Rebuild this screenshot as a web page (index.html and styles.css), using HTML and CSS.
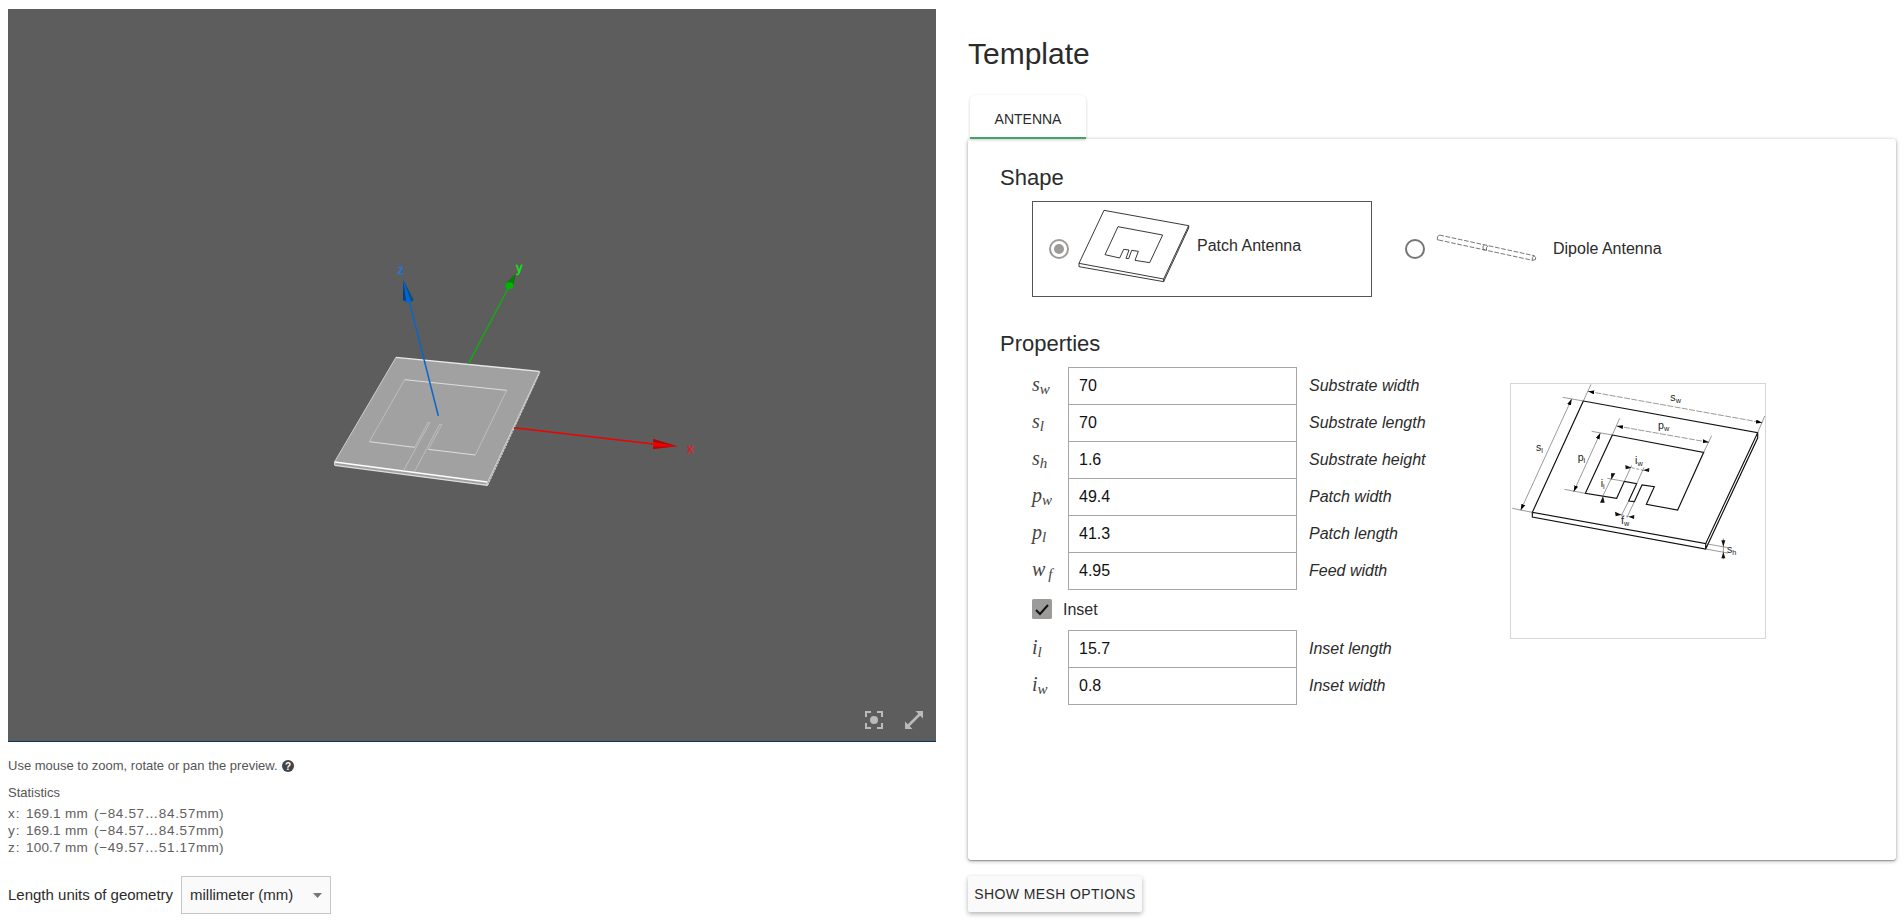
FILE: index.html
```html
<!DOCTYPE html>
<html lang="en">
<head>
<meta charset="utf-8">
<title>Template</title>
<link rel="stylesheet" href="styles.css">
</head>
<body>
<main class="layout">
  <section class="preview">
    <div class="viewer">
      <svg class="scene" viewBox="0 0 928 733">
        <g transform="translate(312 241) scale(.33333)" fill="none">
          <path d="M228 322L658 364L658 371L503 707L44 646L44 635Z" fill="#a1a1a1"/>
          <path d="M44 635L228 322M658 366L502 698" stroke="#cfcfcf" stroke-width="3"/>
          <path d="M228 322L658 364" stroke="#e8e8e8" stroke-width="4"/>
          <path d="M44 636L501 696" stroke="#fff" stroke-width="4.500"/>
          <path d="M44 646L503 706M44 635V646M501 696V706" stroke="#dedede" stroke-width="3.500"/>
          <path d="M503 706L659 369V364" stroke="#d4d4d4" stroke-width="3" stroke-dasharray="7 3"/>
          <path d="M254 389L560 421M148 575L284 592M325 598L466 615" stroke="#dedede" stroke-width="3"/>
          <path d="M148 575L254 389M560 421L466 615M284 592L324 517H330L250 663M325 598L366 523H359L283 666" stroke="#c3c3c3" stroke-width="2.500"/>
          <path d="M445 342L568 108" stroke="#0fae0f" stroke-width="4.500"/>
          <path d="M557 101L588 70L579 110Z" fill="#087d08"/><ellipse cx="568" cy="107" rx="12" ry="10" fill="#00b500"/>
          <path d="M355 498L268 154" stroke="#0867ca" stroke-width="4.500"/>
          <path d="M250 90L249 150Q262 165 281 150Z" fill="#0067d8"/><path d="M250 90L249 150L258 153Z" fill="#123d68"/><path d="M250 90L281 150L274 155Z" fill="#174976"/>
          <path d="M582 533L1000 582" stroke="#f00000" stroke-width="4.500"/>
          <path d="M1000 567L1072 589L999 597Z" fill="#f00000"/><path d="M1000 567L1072 589L1000 576Z" fill="#991010"/><path d="M999 597L1072 589L999 590Z" fill="#b30707"/>
          <g class="axis-labels"><text x="233" y="73" fill="#1b79df" stroke="#1b79df">z</text><text x="588" y="66" fill="#0de90d" stroke="#0de90d">y</text><text x="1101" y="608" fill="#e51b1b" stroke="#e51b1b">x</text></g>
        </g>
      </svg>
      <div class="viewer-tools">
        <svg width="18" height="18" viewBox="0 0 18 18"><path d="M1 6V1H6M12 1H17V6M17 12V17H12M6 17H1V12" fill="none" stroke="#bababa" stroke-width="2"/><circle cx="9" cy="9" r="4" fill="#bababa"/></svg>
        <svg width="18" height="18" viewBox="0 0 18 18"><path d="M10.500 0H18V7.500L15.200 4.700L4.700 15.200L7.500 18H0V10.500L2.800 13.300L13.300 2.800Z" fill="#bababa"/></svg>
      </div>
    </div>
    <div class="hint">Use mouse to zoom, rotate or pan the preview. <svg width="12" height="12" viewBox="0 0 12 12"><circle cx="6" cy="6" r="6" fill="#444"/><text class="help" x="6" y="9.700" text-anchor="middle">?</text></svg></div>
    <div class="stats-title">Statistics</div>
    <div class="stats">
      <div class="stat"><span class="axis">x:</span><span class="size">169.1</span><span class="unit">mm</span><span class="range">(−84.57…84.57</span><span class="end">mm)</span></div>
      <div class="stat"><span class="axis">y:</span><span class="size">169.1</span><span class="unit">mm</span><span class="range">(−84.57…84.57</span><span class="end">mm)</span></div>
      <div class="stat"><span class="axis">z:</span><span class="size">100.7</span><span class="unit">mm</span><span class="range">(−49.57…51.17</span><span class="end">mm)</span></div>
    </div>
    <div class="units"><span class="units-label">Length units of geometry</span><div class="select">millimeter (mm)<svg width="9" height="5" viewBox="0 0 9 5"><path d="M0 0H9L4.500 5Z" fill="#777"/></svg></div></div>
  </section>

  <section class="editor">
    <h1>Template</h1>
    <div class="tab">ANTENNA</div>
    <div class="card">
      <h2>Shape</h2>
      <div class="shapes">
        <div class="shape selected">
          <svg class="radio" width="20" height="20" viewBox="0 0 20 20"><circle cx="10" cy="10" r="9" fill="none" stroke="#9c9b9a" stroke-width="2"/><circle cx="10" cy="10" r="5" fill="#9c9b9a"/></svg>
          <svg class="patch" width="112" height="74" viewBox="0 0 336 222"><path d="M78 4L332 50L257 210L3 163ZM3 163V173L257 218L332 57V50M257 210V218M120 53L254 78L215 161L171 154L181 127L161 124L152 149L144 148L153 123L137 121L125 147L81 137Z" fill="none" stroke="#222" stroke-width="2.700"/></svg>
          <span>Patch Antenna</span>
        </div>
        <div class="shape dipole">
          <svg class="radio" width="20" height="20" viewBox="0 0 20 20"><circle cx="10" cy="10" r="9" fill="none" stroke="#757575" stroke-width="2"/></svg>
          <svg class="rod" width="102" height="28" viewBox="0 0 306 84"><path d="M10 3L294 65M8 18L290 79" stroke="#444" stroke-width="2.200" stroke-dasharray="14 5"/><path d="M10 3Q2 7 4 17L8 18M294 65Q302 70 298 77L290 79M295 65Q286 69 290 79M145 32Q138 38 142 47L148 48M156 35Q148 41 152 50" fill="none" stroke="#444" stroke-width="2.200"/></svg>
          <span>Dipole Antenna</span>
        </div>
      </div>
      <h2 class="properties-title">Properties</h2>
      <div class="properties">
        <div class="form">
          <div class="fields">
            <div class="field"><span class="symbol">s<sub>w</sub></span><input value="70"><em>Substrate width</em></div>
            <div class="field"><span class="symbol">s<sub>l</sub></span><input value="70"><em>Substrate length</em></div>
            <div class="field"><span class="symbol">s<sub>h</sub></span><input value="1.6"><em>Substrate height</em></div>
            <div class="field"><span class="symbol">p<sub>w</sub></span><input value="49.4"><em>Patch width</em></div>
            <div class="field"><span class="symbol">p<sub>l</sub></span><input value="41.3"><em>Patch length</em></div>
            <div class="field"><span class="symbol wide">w<sub>f</sub></span><input value="4.95"><em>Feed width</em></div>
          </div>
          <div class="inset"><svg width="20" height="20" viewBox="0 0 20 20"><rect width="20" height="20" rx="1.500" fill="#9c9b99"/><path d="M4 11L8 15L16 6" fill="none" stroke="#111" stroke-width="2"/></svg><span>Inset</span></div>
          <div class="fields">
            <div class="field"><span class="symbol">i<sub>l</sub></span><input value="15.7"><em>Inset length</em></div>
            <div class="field"><span class="symbol">i<sub>w</sub></span><input value="0.8"><em>Inset width</em></div>
          </div>
        </div>
        <svg class="diagram" viewBox="33 42 762 762">
          <defs><marker id="arrow" viewBox="0 0 19 12" refX="19" refY="6" markerWidth="19" markerHeight="12" markerUnits="userSpaceOnUse" orient="auto-start-reverse"><path d="M0 0L19 6L0 12Z"/></marker></defs>
          <g fill="none" stroke="#111" stroke-width="3.500">
            <path d="M250 93L773 188L617 521L97 427ZM97 427V441L617 537L773 204V188M617 521V537"/>
            <path d="M337 195L611 247L533 420L439 403L463 350L426 345L403 395L386 393L410 341L373 334L350 385L256 370Z"/>
          </g>
          <g fill="none" stroke="#555" stroke-width="1.800">
            <path d="M250 93L273 43M773 188L794 138M337 195L359 145M611 247L635 197M188 82L250 93M37 415L97 427M275 184L337 195M193 358L256 370M373 334L395 286M410 341L432 292M373 334L322 325M386 393L363 439M403 395L381 442M617 521L684 533M617 537L684 549M670 505V568"/>
            <path d="M395 293L430 301M365 434L385 440" stroke-dasharray="9 5"/>
            <g marker-start="url(#arrow)" marker-end="url(#arrow)"><path d="M264 64L787 158" stroke-dasharray="18 4"/><path d="M350 168L627 217" stroke-dasharray="18 4"/><path d="M215 87L62 421"/><path d="M301 189L221 365"/></g>
            <path d="M339 309L333 327M333 327L307 381"/>
            <g stroke="none" fill="#111"><path d="M333 310H346L334 329ZM300 398L309 378L314 398ZM376 285L395 293L377 298ZM448 294L429 301L447 306ZM345 425L365 434L347 439ZM403 435L385 440L402 447ZM664 511H676L670 530ZM664 565H676L670 546Z"/></g>
          </g>
          <g class="dimensions"><text x="511" y="94">s<tspan dy="6">w</tspan></text><text x="474" y="178">p<tspan dy="6">w</tspan></text><text x="108" y="242">s<tspan dy="6">l</tspan></text><text x="233" y="272">p<tspan dy="6">l</tspan></text><text x="405" y="281">i<tspan dy="6">w</tspan></text><text x="302" y="350">i<tspan dy="6">l</tspan></text><text x="363" y="461">f<tspan dy="6">w</tspan></text><text x="681" y="549">s<tspan dy="6">h</tspan></text></g>
        </svg>
      </div>
    </div>
    <button class="mesh">SHOW MESH OPTIONS</button>
  </section>
</main>
</body>
</html>
```
FILE: styles.css
```css
* { box-sizing: border-box; }
body { margin: 0; background: #fff; color: #2b2b2b; font: 16px/20px "Liberation Sans", Arial, sans-serif; overflow: hidden; }
.layout { display: flex; gap: 32px; height: 924px; padding: 9px 8px 0; }
.preview, .editor { width: 928px; flex: none; display: flex; flex-direction: column; align-items: flex-start; }
.viewer { width: 928px; height: 733px; flex: none; background: #5d5d5d; border-bottom: 1px solid #06365b; position: relative; }
.scene { display: block; width: 928px; height: 733px; }
.axis-labels { font: 38px "Liberation Sans", Arial, sans-serif; stroke-width: 1.2; }
.viewer-tools { position: absolute; right: 13px; bottom: 12px; display: flex; gap: 22px; }
.viewer-tools svg { display: block; }
.hint { height: 16px; margin-top: 16px; display: flex; align-items: center; gap: 4px; color: #555; font-size: 13px; line-height: 16px; white-space: nowrap; }
.help { font: bold 10px "Liberation Sans", Arial, sans-serif; fill: #fff; }
.stats-title { margin-top: 11px; height: 16px; color: #555; font-size: 13px; line-height: 16px; }
.stats { margin-top: 4px; color: #606060; font-size: 13.5px; letter-spacing: .2px; }
.stat { display: grid; grid-template-columns: 18px 39px 29px 102px 30px; height: 17px; line-height: 17px; white-space: nowrap; }
.axis { letter-spacing: 1px; }
.range { letter-spacing: .65px; }
.units { margin-top: 20px; display: flex; align-items: center; font-size: 15px; }
.units-label { width: 173px; white-space: nowrap; }
.select { width: 150px; height: 38px; border: 1px solid #c6c6c6; background: #fafafa; padding: 0 8px; display: flex; align-items: center; justify-content: space-between; }
h1, h2 { font-weight: 400; margin: 0; }
h1 { margin-top: 27px; height: 36px; font-size: 30px; line-height: 36px; }
.tab { width: 116px; height: 44px; margin: 23px 0 0 2px; padding-top: 14px; border-bottom: 2px solid #43a36d; border-radius: 6px 6px 0 0; box-shadow: 0 1px 3px rgba(0,0,0,.2); background: #fff; text-align: center; font-size: 14px; line-height: 20px; position: relative; }
.card { width: 928px; height: 721px; flex: none; padding: 25px 32px; background: #fff; border-radius: 3px; box-shadow: 0 1px 4px rgba(0,0,0,.35), 0 1px 1px rgba(0,0,0,.25); }
h2 { height: 28px; font-size: 22px; line-height: 28px; }
.shapes { display: flex; margin: 9px 0 0 32px; height: 96px; }
.shape { display: flex; height: 96px; }
.selected { width: 340px; border: 1px solid #555; padding-left: 16px; }
.radio { margin-top: 37px; flex: none; }
.patch { margin: 7px 0 0 9px; flex: none; }
.selected span { margin: 34px 0 0 7px; }
.dipole { margin-left: 33px; }
.dipole .radio { margin-top: 38px; }
.rod { margin: 33px 0 0 11px; }
.dipole span { margin: 38px 0 0 15px; }
.properties-title { margin-top: 33px; }
.properties { display: flex; align-items: flex-start; margin: 9px 0 0 32px; }
.form { width: 478px; }
.fields { padding-bottom: 1px; }
.field { display: flex; align-items: flex-start; height: 37px; }
.symbol { width: 36px; padding-top: 6px; font: italic 20px/22px "Liberation Serif", serif; color: #444; }
.symbol sub { font-size: 15px; line-height: 0; vertical-align: -3px; }
.wide sub { margin-left: 3px; }
.field input { width: 229px; height: 38px; border: 1px solid #a6a6a6; border-radius: 0; margin: 0; padding: 0 10px; background: #fff; color: #111; font: 16px "Liberation Sans", Arial, sans-serif; outline: 0; }
.field em { margin: 9px 0 0 12px; white-space: nowrap; }
.inset { display: flex; align-items: center; gap: 11px; margin: 9px 0 11px; height: 20px; }
.inset span { padding-top: 2px; }
.diagram { width: 256px; height: 256px; margin-top: 16px; border: 1px solid #d6d6d6; flex: none; }
.dimensions { font: 32px "Liberation Sans", Arial, sans-serif; fill: #222; }
.dimensions tspan { font-size: 22px; }
.mesh { width: 174px; height: 36px; margin-top: 16px; border: 0; border-radius: 2px; padding: 0; background: #fafafa; box-shadow: 0 2px 5px rgba(0,0,0,.3); color: #2b2b2b; font: 14px "Liberation Sans", Arial, sans-serif; letter-spacing: .4px; white-space: nowrap; }
```
